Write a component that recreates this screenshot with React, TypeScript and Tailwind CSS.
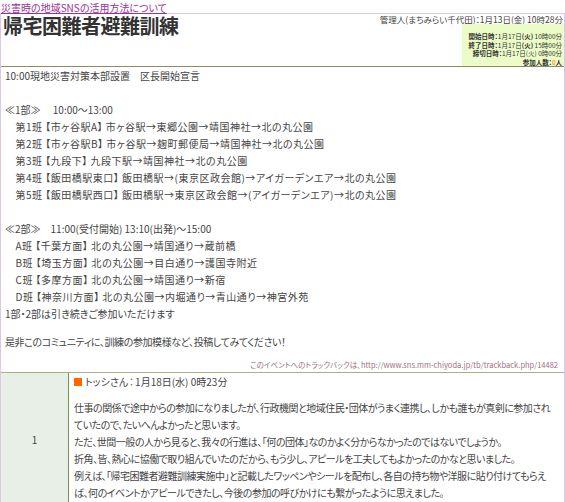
import React from "react";

const groups1 = [
  "　第1班 【市ヶ谷駅A】 市ヶ谷駅→東郷公園→靖国神社→北の丸公園",
  "　第2班 【市ヶ谷駅B】 市ヶ谷駅→麹町郵便局→靖国神社→北の丸公園",
  "　第3班 【九段下】 九段下駅→靖国神社→北の丸公園",
  "　第4班 【飯田橋駅東口】 飯田橋駅→(東京区政会館)→アイガーデンエア→北の丸公園",
  "　第5班 【飯田橋駅西口】 飯田橋駅→東京区政会館→(アイガーデンエア)→北の丸公園",
];

const groups2 = [
  "　A班 【千葉方面】 北の丸公園→靖国通り→蔵前橋",
  "　B班 【埼玉方面】 北の丸公園→目白通り→護国寺附近",
  "　C班 【多摩方面】 北の丸公園→靖国通り→新宿",
  "　D班 【神奈川方面】 北の丸公園→内堀通り→青山通り→神宮外苑",
];

const commentLines = [
  "仕事の関係で途中からの参加になりましたが、行政機関と地域住民・団体がうまく連携し、しかも誰もが真剣に参加され",
  "ていたので、たいへんよかったと思います。",
  "ただ、世間一般の人から見ると、我々の行進は、「何の団体」なのかよく分からなかったのではないでしょうか。",
  "折角、皆、熱心に協働で取り組んでいたのだから、もう少し、アピールを工夫してもよかったのかなと思いました。",
  "例えば、「帰宅困難者避難訓練実施中」と記載したワッペンやシールを配布し、各自の持ち物や洋服に貼り付けてもらえ",
  "ば、何のイベントかアピールできたし、今後の参加の呼びかけにも繋がったように思えました。",
];

const Blank = ({ h = "h-[17px]" }: { h?: string }) => <div className={h} />;

export default function App() {
  return (
    <div className="w-[565px] h-[502px] overflow-hidden bg-white text-[#444] font-['Noto_Sans_CJK_JP','Noto_Sans',sans-serif] [font-feature-settings:'palt']">
      {/* Community link */}
      <a
        href="#"
        className="block h-[13px] w-fit pl-[1px] pt-[2px] text-[10px] leading-[11px] text-[#993399] underline"
      >
        災害時の地域SNSの活用方法について
      </a>

      <div className="border-x border-t border-[#dcc8e2]">
        {/* Header */}
        <div className="flex justify-between border-b border-[#8c8c5e]">
          <h1 className="pl-[2px] pt-[1px] text-[20px] font-bold leading-[22px] text-[#333] tracking-[-0.5px]">
            帰宅困難者避難訓練
          </h1>
          <div className="flex flex-col items-end whitespace-nowrap">
            <div className="pr-[1px] text-[8.5px] leading-[10px] text-[#444]">
              管理人(まちみらい千代田)：1月13日(金) 10時28分
            </div>
            <div className="w-[102px] bg-[#ebfcc6] pr-[2px] pt-[8px] text-right text-[6.5px] leading-[8.5px] text-[#333]">
              <div>
                <span className="font-bold">開始日時：</span>1月17日<span className="font-bold">(火)</span> 10時00分
              </div>
              <div>
                <span className="font-bold">終了日時：</span>1月17日<span className="font-bold">(火)</span> 15時00分
              </div>
              <div>
                <span className="font-bold">締切日時：</span>1月17日(火) 0時00分
              </div>
              <div>
                <span className="font-bold">参加人数：</span>
                <span className="text-[#ff6600]">0</span>
                <span className="font-bold">人</span>
              </div>
            </div>
          </div>
        </div>

        {/* Event description */}
        <div className="px-[4px] text-[10px] leading-[17px] whitespace-nowrap">
          <div>10:00現地災害対策本部設置　区長開始宣言</div>
          <Blank />
          <div>≪1部≫　 10:00～13:00</div>
          {groups1.map((g) => (
            <div key={g} className="tracking-[0.5px]">
              {g}
            </div>
          ))}
          <Blank />
          <div>≪2部≫　11:00(受付開始) 13:10(出発)～15:00</div>
          {groups2.map((g) => (
            <div key={g} className="tracking-[0.5px]">
              {g}
            </div>
          ))}
          <div>1部・2部は引き続きご参加いただけます</div>
          <Blank h="h-[11px]" />
          <div className="tracking-[-0.4px]">是非このコミュニティに、訓練の参加模様など、投稿してみてください！</div>
        </div>

        <div className="mt-[9px] pr-[6px] text-right text-[7.5px] leading-[12px] text-[#a0707e] whitespace-nowrap">
          このイベントへのトラックバックは、http://www.sns.mm-chiyoda.jp/tb/trackback.php/14482
        </div>

        {/* Comments */}
        <div className="mt-[1px] flex border-y border-[#a4b08a]">
          <div className="flex w-[68px] shrink-0 items-center justify-center border-r border-[#6a9a52] bg-[#e8efe6] text-[10px] text-[#444]">
            1
          </div>
          <div className="flex-1 pl-[5px] pr-[4px] pb-[4px]">
            <div className="flex items-center text-[10px] leading-[17px]">
              <span className="mr-[3px] inline-block h-[8px] w-[8px] bg-[#ff6600]" />
              <span>トッシさん</span>
              <span className="mx-[1px] text-[#339900]">：</span>
              <span>1月18日(水) 0時23分</span>
            </div>
            <div className="mt-[9px] text-[10px] leading-[17px] tracking-[-0.5px] whitespace-nowrap">
              {commentLines.map((l) => (
                <div key={l}>{l}</div>
              ))}
            </div>
          </div>
        </div>
      </div>
    </div>
  );
}
